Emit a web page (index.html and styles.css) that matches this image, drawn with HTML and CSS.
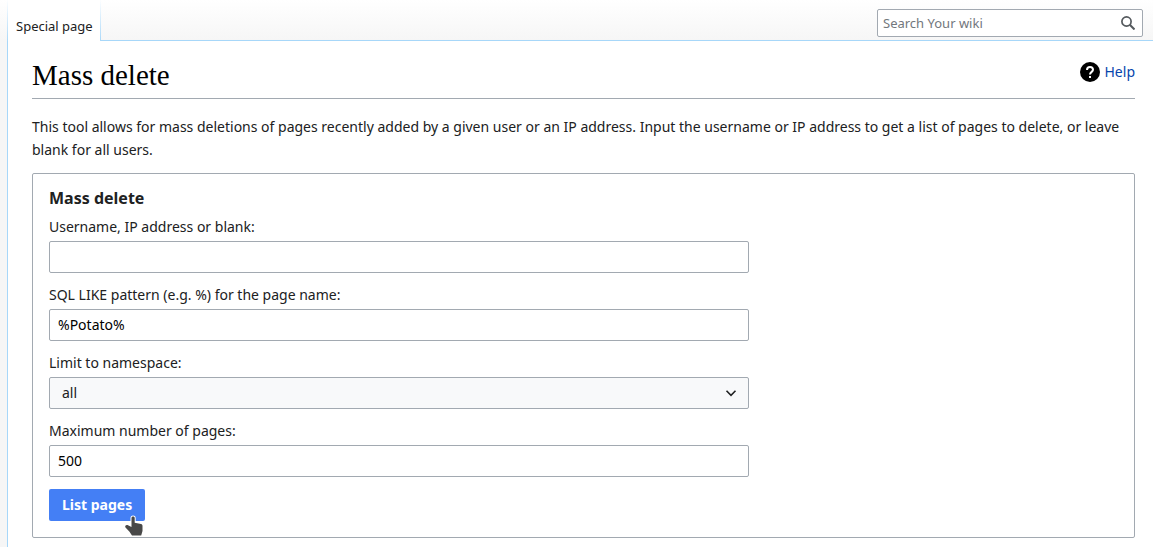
FILE: index.html
```html
<!DOCTYPE html>
<html lang="en">
<head>
    <meta charset="UTF-8">
    <title>Mass delete - Your wiki</title>
    <link rel="stylesheet" href="styles.css">
</head>
<body>
    <header class="page-head">
        <nav class="tabs">
            <a class="tab" href="#">Special page</a>
        </nav>
        <form class="search" role="search">
            <input type="search" class="search-input" placeholder="Search Your wiki" aria-label="Search Your wiki">
            <button type="submit" class="search-button" aria-label="Search">
                <svg width="14" height="14" viewBox="0 0 14 14" fill="none" stroke="#54595d">
                    <circle cx="5.5" cy="5.5" r="4.6" stroke-width="1.7"/>
                    <path d="M8.8 8.8L13.5 13.5" stroke-width="2"/>
                </svg>
            </button>
        </form>
    </header>

    <main class="content">
        <div class="title-bar">
            <h1>Mass delete</h1>
            <a class="help" href="#">
                <svg width="20" height="20" viewBox="0 0 20 20">
                    <circle cx="10" cy="10" r="10" fill="#000"/>
                    <path d="M7 8C7 6 8.2 5 10 5s3 1 3 2.8C13 9.8 10 10 10 12.5" fill="none" stroke="#fff" stroke-width="2"/>
                    <path d="M9 14h2v2H9z" fill="#fff"/>
                </svg>
                <span>Help</span>
            </a>
        </div>

        <p class="intro">This tool allows for mass deletions of pages recently added by a given user or an IP address. Input the username or IP address to get a list of pages to delete, or leave blank for all users.</p>

        <form>
            <fieldset class="panel">
                <legend>Mass delete</legend>
                <div class="field">
                    <label for="username">Username, IP address or blank:</label>
                    <input type="text" id="username">
                </div>
                <div class="field">
                    <label for="pattern">SQL LIKE pattern (e.g. %) for the page name:</label>
                    <input type="text" id="pattern" value="%Potato%">
                </div>
                <div class="field">
                    <label for="namespace">Limit to namespace:</label>
                    <div class="select-wrap">
                        <select id="namespace">
                            <option>all</option>
                        </select>
                        <svg class="arrow" width="12" height="12" viewBox="0 0 12 12" fill="none" stroke="#202122" stroke-width="1.6">
                            <path d="M1.5 3.8L6 8.3l4.5-4.5"/>
                        </svg>
                    </div>
                </div>
                <div class="field">
                    <label for="limit">Maximum number of pages:</label>
                    <input type="text" id="limit" value="500">
                </div>
                <div class="actions">
                    <button type="submit" class="submit">List pages</button>
                    <svg class="pointer" width="20" height="22" viewBox="0 0 20 22">
                        <path d="M7.5 3C7.5 1 10.7 1 10.7 3V7.8l6.3 1.2c1 .3 1.5 1 1.5 2V16l-1.3 4.5H8L5.5 16.8 1.5 12.5c-1-1.5.5-3 2-2.5l4 2z" fill="#484848" stroke="#fff" stroke-width="2" stroke-linejoin="round" paint-order="stroke"/>
                    </svg>
                </div>
            </fieldset>
        </form>
    </main>
</body>
</html>
```

FILE: styles.css
```css
* {
    box-sizing: border-box;
}

body {
    margin: 0;
    background: #f6f6f6 linear-gradient(#fff, #f6f6f6) top / 100% 40px no-repeat;
    color: #202122;
    font-family: "Noto Sans", sans-serif;
    font-size: 14px;
}

/* Header with tab and search */

.page-head {
    display: flex;
    justify-content: space-between;
    height: 41px;
    margin-left: 7px;
    padding-right: 10px;
    border-bottom: 1px solid #a7d7f9;
}

.tabs {
    display: flex;
    height: 41px;
}

.tab {
    padding: 16px 7px 0 8px;
    background-color: #fff;
    border: 1px solid;
    border-width: 0 1px;
    border-image: linear-gradient(#fff, #a7d7f9) 1;
    color: #202122;
    font-size: 13px;
    line-height: 20px;
    text-decoration: none;
}

.search {
    display: flex;
    width: 266px;
    height: 28px;
    margin-top: 9px;
    background-color: #fff;
    border: 1px solid #a2a9b1;
    border-radius: 2px;
}

.search-input {
    flex: 1;
    min-width: 0;
    padding: 0 5px;
    background: none;
    border: 0;
    font-family: inherit;
    font-size: 13px;
}

.search-input::placeholder {
    color: #72777d;
}

.search-button {
    display: flex;
    align-items: center;
    justify-content: center;
    width: 28px;
    padding: 0;
    background: none;
    border: 0;
    cursor: pointer;
}

/* Content */

.content {
    min-height: calc(100vh - 41px);
    margin-left: 7px;
    padding: 15px 18px 9px 24px;
    background-color: #fff;
    border-left: 1px solid #a7d7f9;
}

.title-bar {
    display: flex;
    justify-content: space-between;
    padding-bottom: 4px;
    border-bottom: 1px solid #a2a9b1;
}

h1 {
    margin: 0;
    color: #000;
    font-family: "Liberation Serif", serif;
    font-size: 29px;
    font-weight: normal;
    line-height: 38px;
}

.help {
    display: flex;
    align-items: center;
    gap: 5px;
    height: 31px;
    color: #0645ad;
    line-height: 20px;
    text-decoration: none;
}

.intro {
    margin: 16px 0 12px;
    line-height: 23px;
}

.panel {
    margin: 0;
    padding: 13px 16px 16px;
    border: 1px solid #a2a9b1;
    border-radius: 2px;
}

.panel legend {
    float: left;
    width: 100%;
    margin-bottom: 7px;
    padding: 0;
    font-size: 16px;
    font-weight: bold;
    line-height: 23px;
}

.field {
    clear: both;
    max-width: 700px;
    margin-bottom: 12px;
}

.field label {
    display: block;
    margin-bottom: 4px;
    line-height: 20px;
}

.field input,
.field select {
    display: block;
    width: 100%;
    height: 32px;
    padding: 0 8px 2px;
    background-color: #fff;
    border: 1px solid #a2a9b1;
    border-radius: 2px;
    color: #000;
    font-family: inherit;
    font-size: 14px;
}

.select-wrap {
    position: relative;
}

.field select {
    appearance: none;
    padding: 0 12px 2px;
    background-color: #f8f9fa;
    color: #202122;
}

.arrow {
    position: absolute;
    top: 10px;
    right: 12px;
    pointer-events: none;
}

.actions {
    position: relative;
    display: flex;
}

.submit {
    height: 32px;
    padding: 0 13px 2px;
    background-color: #447ff5;
    border: 0;
    border-radius: 2px;
    color: #fff;
    font-family: inherit;
    font-size: 14px;
    font-weight: bold;
    cursor: pointer;
}

.pointer {
    position: absolute;
    top: 26px;
    left: 75px;
    pointer-events: none;
}
```
